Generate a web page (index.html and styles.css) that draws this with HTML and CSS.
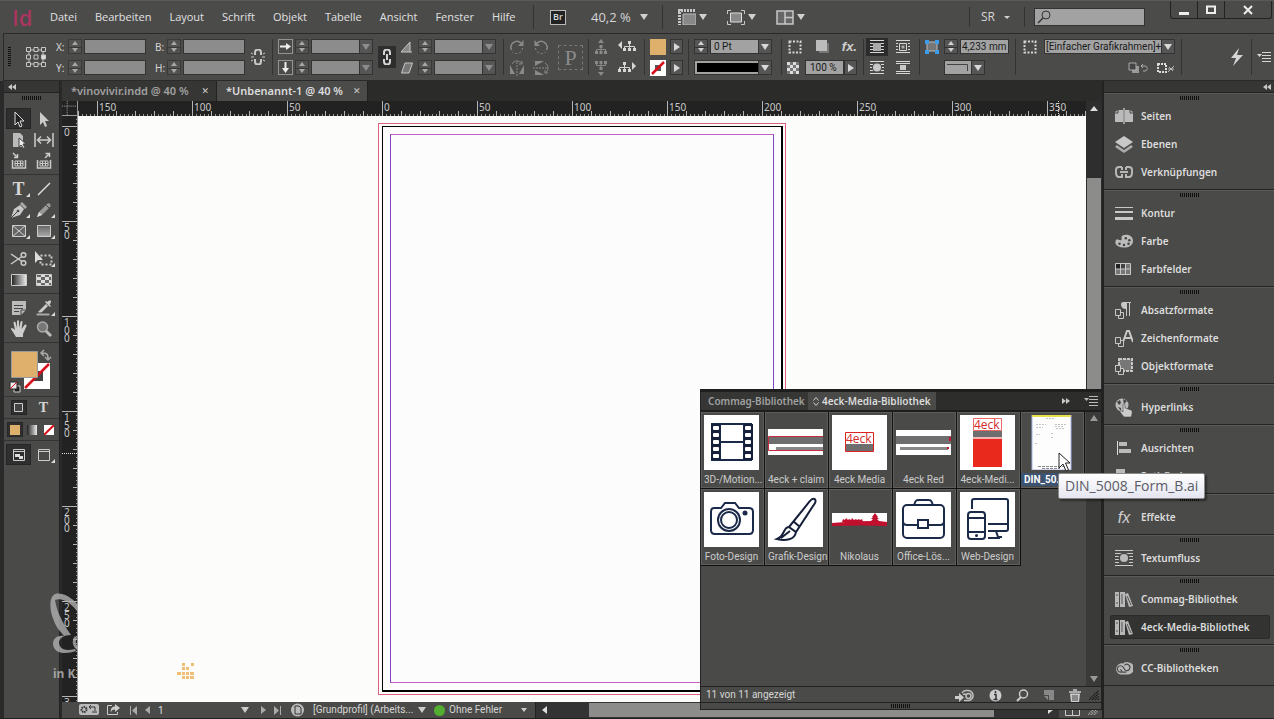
FILE: index.html
```html
<!DOCTYPE html>
<html lang="de">
<head>
<meta charset="utf-8">
<title>Unbenannt-1</title>
<link rel="stylesheet" href="styles.css">
</head>
<body>
<svg class="sprite" aria-hidden="true">
  <defs>
    <linearGradient id="lg" x1="0" x2="1"><stop offset="0" stop-color="#222"/><stop offset="1" stop-color="#eee"/></linearGradient>
    <linearGradient id="gv" x1="0" x2="0" y1="0" y2="1"><stop offset="0" stop-color="#666"/><stop offset="1" stop-color="#aaa"/></linearGradient>
  </defs>
  <symbol id="tree-v" viewBox="0 0 14 16"><path d="M7 0l3 4H4zM5.500 6h3v3h-3zM1 12h3v3H1zM5.500 12h3v3h-3zM10 12h3v3h-3z" fill="currentColor"/><path d="M7 8v4M2.500 12v-1.500h9V12" fill="none" stroke="currentColor"/></symbol>
  <symbol id="tree-h" viewBox="0 0 18 14"><path d="M0 5l4-4v8zM10 1h3v3h-3zM5 8h3v3H5zM10 8h3v3h-3zM15 8h3v3h-3z" fill="currentColor"/><path d="M11.500 4v5M6.500 8V6.500h10V8" fill="none" stroke="currentColor"/></symbol>
  <symbol id="rot" viewBox="0 0 16 16"><path d="M2.500 11A6 6 0 0 1 12 4" fill="none" stroke="currentColor" stroke-width="1.500"/><path d="M14.500 1v6H9z" fill="currentColor"/><path d="M13.500 9a6 6 0 0 1-10 4" fill="none" stroke="currentColor" stroke-dasharray="2 2"/></symbol>
  <symbol id="flip" viewBox="0 0 16 16"><path d="M1 14V5l5 9zM15 14V5l-5 9z" fill="currentColor"/><path d="M8 2v14" stroke="currentColor" stroke-dasharray="2 1"/><path d="M3 4c2-4 8-4 10 0M13 1v3h-3" fill="none" stroke="currentColor"/></symbol>
  <symbol id="wrap1" viewBox="0 0 14 14"><path d="M0 .5h14M0 3.500h14M0 6.500h14M0 9.500h14M0 12.500h14" stroke="currentColor"/><path d="M3 3h8v8H3z" fill="#aaa"/></symbol>
  <symbol id="wrap2" viewBox="0 0 14 14"><path d="M0 .5h14M0 3.500h2M12 3.500h2M0 6.500h2M12 6.500h2M0 9.500h2M12 9.500h2M0 12.500h14" stroke="currentColor"/><path d="M3.500 3.500h7v7h-7z" fill="none" stroke="currentColor"/><path d="M5.500 5.500h3v3h-3z" fill="#aaa"/></symbol>
  <symbol id="wrap3" viewBox="0 0 14 14"><path d="M0 .5h14M0 3.500h3M11 3.500h3M0 6.500h2M12 6.500h2M0 9.500h3M11 9.500h3M0 12.500h14" stroke="currentColor"/><circle cx="7" cy="6.500" r="4" fill="#c8c8c8"/></symbol>
  <symbol id="wrap4" viewBox="0 0 14 14"><path d="M0 .5h14M0 2.500h14M0 10.500h14M0 12.500h14" stroke="currentColor"/><path d="M4 4h6v5H4z" fill="#c8c8c8"/></symbol>
  <symbol id="books" viewBox="0 0 18 16"><path d="M0 1h4v15H0zM5 1h5v15H5zM10 3l3-1 5 13-4 1z" fill="#b8b8b8"/><path d="M1 4h2M1 12h2M7 3v10M12 5l4 9" stroke="#555" fill="none"/></symbol>
  <symbol id="fstyle" viewBox="0 0 9 10"><path d="M3.500 3.500h5v6h-5z" fill="#4a4a48" stroke="#c8c8c8"/><path d="M.5.5h5v6h-5z" fill="#4a4a48" stroke="#c8c8c8"/></symbol>
  <symbol id="cc" viewBox="0 0 20 16"><path d="M6 15.200h8.500A6.500 6.500 0 0 0 14 1.500a6.500 6.500 0 0 0-5 1.500A6.200 6.200 0 0 0 6 15.200z" fill="#b8b8b8"/><path d="M12.500 12.500H6a3.500 3.500 0 1 1 3-5.500l2.500 3.500a3.500 3.500 0 1 0-1-5.500M6 9.500l2 3" fill="none" stroke="#4a4a48" stroke-width="1.300"/></symbol>
  <symbol id="flyout" viewBox="0 0 14 10"><path d="M0 2h5L2.500 5z" fill="currentColor"/><path d="M5 .5h9M5 3.500h9M5 6.500h9M5 9.500h9" stroke="currentColor"/></symbol>
  <symbol id="none" viewBox="0 0 16 16"><path d="M0 0h16v16H0z" fill="#fff"/><path d="M5 5h6v6H5z" fill="#555"/><path d="M2 14L14 2" stroke="#d8101c" stroke-width="2.500"/></symbol>
  <symbol id="frame" viewBox="0 0 16 16"><path d="M2.500 2.500h11v11h-11z" fill="none" stroke="currentColor" stroke-width="2" stroke-dasharray="2 1.500"/></symbol>
  <symbol id="checker" viewBox="0 0 12 12"><path d="M0 0h12v12H0z" fill="#777"/><path d="M0 0h3v3H0zM6 0h3v3H6zM3 3h3v3H3zM9 3h3v3H9zM0 6h3v3H0zM6 6h3v3H6zM3 9h3v3H3zM9 9h3v3H9z" fill="#ddd"/></symbol>
  <symbol id="chain" viewBox="0 0 10 16"><path d="M2 6V3.500a3 3 0 0 1 6 0V6M2 10v2.500a3 3 0 0 0 6 0V10M5 5v6" fill="none" stroke="currentColor" stroke-width="2"/></symbol>
  <symbol id="first" viewBox="0 0 7 9"><path d="M.5 0v9" stroke="#aaa"/><path d="M7 0v9L2 4.500z" fill="#aaa"/></symbol>
  <symbol id="chev" viewBox="0 0 8 6"><path d="M4 0v6L0 3zM8 0v6L4 3z" fill="#c8c8c8"/></symbol>
</svg>

<header class="menubar">
  <span class="logo">Id</span>
  <nav class="menus">
    <button>Datei</button><button>Bearbeiten</button><button>Layout</button><button>Schrift</button><button>Objekt</button><button>Tabelle</button><button>Ansicht</button><button>Fenster</button><button>Hilfe</button>
  </nav>
  <div class="viewtools">
    <button class="bridge">Br</button>
    <button class="zoomlevel down">40,2 %</button>
  </div>
  <div class="screens">
    <button class="down" aria-label="Anzeigeoptionen"><svg width="18" height="16" viewBox="0 0 18 16"><path d="M5 5h13v11H5z" fill="#888" stroke="#bbb"/><path d="M0 1.500h18M1.500 0v16" stroke="#c8c8c8" stroke-width="3" stroke-dasharray="2 1"/></svg></button>
    <button class="down" aria-label="Bildschirmmodus"><svg width="18" height="15" viewBox="0 0 18 15"><path d="M3.500 3h11v9h-11z" fill="#888" stroke="#ddd"/><path d="M.5 4V.5H4M14 .5h3.500V4M.5 11v3.500H4M14 14.500h3.500V11" fill="none" stroke="#c8c8c8"/></svg></button>
    <button class="down" aria-label="Dokumente anordnen"><svg width="18" height="15" viewBox="0 0 18 15"><path d="M1 1h16v13H1zM9 1v13M9 7.500h8" fill="#666" stroke="#c8c8c8" stroke-width="1.500"/></svg></button>
  </div>
  <button class="workspace-menu down">SR</button>
  <label class="search"><svg width="14" height="14" viewBox="0 0 14 14"><circle cx="9" cy="5" r="4" fill="none" stroke="#333"/><path d="M6 8l-5 5" stroke="#333" stroke-width="1.500"/></svg><input type="search" aria-label="Suche"></label>
  <div class="winbuttons">
    <button aria-label="Minimieren"><svg width="10" height="10" viewBox="0 0 10 10"><path d="M0 7h10v3H0z" fill="#eee"/></svg></button>
    <button aria-label="Maximieren"><svg width="10" height="10" viewBox="0 0 10 10"><path d="M1 1.500h8v6.500H1z" fill="none" stroke="#eee" stroke-width="2"/></svg></button>
    <button aria-label="Schließen"><svg width="10" height="10" viewBox="0 0 10 10"><path d="M1 1l8 8M9 1l-8 8" stroke="#eee" stroke-width="2"/></svg></button>
  </div>
</header>

<section class="control">
  <div class="one"><i class="vgrip"></i></div>
  <div class="one"><svg width="20" height="20" viewBox="0 0 20 20" fill="none" stroke="#c8c8c8"><path d="M3 3h14v14H3z"/><path fill="#4a4a48" d="M.5.5h4v4h-4zM8 .5h4v4H8zM15.500.5h4v4h-4zM.5 8h4v4h-4zM8 8h4v4H8zM.5 15.500h4v4h-4zM8 15.500h4v4H8zM15.500 15.500h4v4h-4z"/><path fill="#ddd" d="M15.500 8h4v4h-4z"/></svg></div>
  <div class="pair">
    <label for="fx">X:</label><span class="spin off"><button aria-label="X erhöhen"></button><button aria-label="X verringern"></button></span><input id="fx" class="off">
    <label for="fy">Y:</label><span class="spin off"><button aria-label="Y erhöhen"></button><button aria-label="Y verringern"></button></span><input id="fy" class="off">
  </div>
  <div class="pair">
    <label for="fb">B:</label><span class="spin off"><button aria-label="B erhöhen"></button><button aria-label="B verringern"></button></span><input id="fb" class="off">
    <label for="fh">H:</label><span class="spin off"><button aria-label="H erhöhen"></button><button aria-label="H verringern"></button></span><input id="fh" class="off">
  </div>
  <div class="one"><svg width="14" height="16" viewBox="0 0 14 16" fill="none" stroke="#c8c8c8"><path d="M4 6V3.500a3 3 0 0 1 6 0V6M4 10v2.500a3 3 0 0 0 6 0V10" stroke-width="2"/><path d="M0 4l2 1M0 8h3M0 12l2-1M14 4l-2 1M14 8h-3M14 12l-2-1"/></svg></div>
  <div class="pair wide sep">
    <svg width="15" height="15" viewBox="0 0 15 15"><path d="M.5.500h14v14H.5z" fill="none" stroke="#ddd" stroke-dasharray="1 1"/><path d="M2 7.500h8" stroke="#eee" stroke-width="2"/><path d="M8 4l5 3.500L8 11z" fill="#eee"/></svg><span class="spin off"><button aria-label="Breite erhöhen"></button><button aria-label="Breite verringern"></button></span><span class="combo off"><select aria-label="X-Skalierung"><option></option></select></span>
    <svg width="15" height="15" viewBox="0 0 15 15"><path d="M.5.500h14v14H.5z" fill="none" stroke="#ddd" stroke-dasharray="1 1"/><path d="M7.500 2v8" stroke="#eee" stroke-width="2"/><path d="M4 8l3.500 5L11 8z" fill="#eee"/></svg><span class="spin off"><button aria-label="Höhe erhöhen"></button><button aria-label="Höhe verringern"></button></span><span class="combo off"><select aria-label="Y-Skalierung"><option></option></select></span>
  </div>
  <div class="one"><button class="lock" aria-label="Proportionen beibehalten"><svg width="10" height="16"><use href="#chain"/></svg></button></div>
  <div class="pair wide">
    <svg width="12" height="12" viewBox="0 0 12 12"><path d="M0 11h11M0 11L9 1v10" fill="#888" stroke="#c8c8c8"/></svg><span class="spin off"><button aria-label="Winkel erhöhen"></button><button aria-label="Winkel verringern"></button></span><span class="combo off"><select aria-label="Drehwinkel"><option></option></select></span>
    <svg width="12" height="12" viewBox="0 0 12 12"><path d="M4 1h7.500L8 11H.5z" fill="#777" stroke="#c8c8c8"/></svg><span class="spin off"><button aria-label="Scherung erhöhen"></button><button aria-label="Scherung verringern"></button></span><span class="combo off"><select aria-label="Scherwinkel"><option></option></select></span>
  </div>
  <div class="quad dim sep">
    <svg width="16" height="16"><use href="#rot"/></svg><svg class="mirror" width="16" height="16"><use href="#rot"/></svg>
    <svg width="16" height="16"><use href="#flip"/></svg><svg class="turn" width="16" height="16"><use href="#flip"/></svg>
  </div>
  <div class="one dim"><span class="bigp">P</span></div>
  <div class="quad trees sep">
    <svg class="dim" width="14" height="16"><use href="#tree-v"/></svg><svg width="18" height="14"><use href="#tree-h"/></svg>
    <svg class="dim down-flip" width="14" height="16"><use href="#tree-v"/></svg><svg class="mirror" width="18" height="14"><use href="#tree-h"/></svg>
  </div>
  <div class="quad color sep">
    <i class="tan"></i><button class="go" aria-label="Fläche"></button>
    <svg width="16" height="16"><use href="#none"/></svg><button class="go" aria-label="Kontur"></button>
  </div>
  <div class="rows sep">
    <div><span class="spin"><button aria-label="Stärke erhöhen"></button><button aria-label="Stärke verringern"></button></span><span class="combo"><select aria-label="Konturstärke"><option>0 Pt</option></select></span></div>
    <div><span class="combo line"><select aria-label="Konturart"><option></option></select></span></div>
  </div>
  <div class="rows sep fx">
    <div><svg width="16" height="16"><use href="#frame"/></svg><svg width="15" height="15" viewBox="0 0 15 15"><path d="M4 4h10v10H4z" fill="#777"/><path d="M1 1h11v11H1z" fill="#bbb"/></svg><b class="fxi">fx.</b></div>
    <div><svg width="12" height="12"><use href="#checker"/></svg><span class="percent"><input aria-label="Deckkraft" value="100 %"><button class="go" aria-label="Deckkraft einstellen"></button></span></div>
  </div>
  <div class="quad wrap sep">
    <span class="on"><svg width="14" height="14"><use href="#wrap1"/></svg></span><svg width="14" height="14"><use href="#wrap2"/></svg>
    <span><svg width="14" height="14"><use href="#wrap3"/></svg></span><svg width="14" height="14"><use href="#wrap4"/></svg>
  </div>
  <div class="rows sep corner">
    <div><svg width="14" height="15" viewBox="0 0 14 15"><path d="M2 3h10v9H2z" fill="#777" stroke="#bbb"/><path d="M0 1h4v4H0zM10 1h4v4h-4zM0 11h4v4H0zM10 11h4v4h-4z" fill="#3d9be9"/></svg><span class="spin"><button aria-label="Ecke erhöhen"></button><button aria-label="Ecke verringern"></button></span><input aria-label="Eckengröße" value="4,233 mm"></div>
    <div class="indent"><span class="combo edge"><select aria-label="Eckenform"><option></option></select><svg width="22" height="8" viewBox="0 0 22 8"><path d="M0 1.500h20.500V8" fill="none" stroke="#444"/></svg></span></div>
  </div>
  <div class="rows sep style">
    <div><svg width="16" height="16"><use href="#frame"/></svg><span class="combo long"><select aria-label="Objektformat"><option>[Einfacher Grafikrahmen]+</option></select></span></div>
    <div class="end"><svg width="21" height="12" viewBox="0 0 21 12"><path d="M4 4h7v7H4z" fill="#999"/><path d="M1 1h7v7H1z" fill="#444" stroke="#aaa"/><path d="M15 2l-2 2 2 2M13 4h4c3 0 3 5 0 5h-2" fill="none" stroke="#aaa"/></svg><svg width="18" height="12" viewBox="0 0 18 12"><path d="M1 2h8v8H1z" fill="none" stroke="#ddd" stroke-width="2" stroke-dasharray="2 1"/><path d="M11 10l6-6M12 5l4 4M11 7h6" stroke="#bbb"/></svg></div>
  </div>
  <div class="one bolt sep"><svg width="13" height="18" viewBox="0 0 13 18"><path d="M9 0L1 10l5 0-3 8 10-11-6 0z" fill="#d5d5d5"/></svg></div>
  <div class="one sep last"><button aria-label="Menü"><svg width="14" height="10"><use href="#flyout"/></svg></button></div>
</section>

<main class="work">
  <aside class="tools">
    <div class="head"><svg width="8" height="6"><use href="#chev"/></svg></div>
    <i class="grip"></i>
    <div class="tgroup">
      <button class="on" aria-label="Auswahl"><svg width="18" height="18" viewBox="0 0 18 18"><path d="M5 2v13l3-3 2 5 2-1-2-5h4z" fill="#222" stroke="#ddd"/></svg></button>
      <button aria-label="Direktauswahl"><svg width="18" height="18" viewBox="0 0 18 18"><path d="M5 2v13l3-3 2 5 2-1-2-5h4z" fill="#ccc"/></svg></button>
      <button aria-label="Seite"><svg width="18" height="18" viewBox="0 0 18 18"><path d="M3 2h7l3 3v11H3z" fill="#bbb"/><path d="M9 7v9l2-2 3 4 1-1-2-4h3z" fill="#eee" stroke="#444"/></svg></button>
      <button aria-label="Lücke"><svg width="20" height="18" viewBox="0 0 20 18"><path d="M1 2v14M19 2v14" stroke="#ccc" stroke-width="1.500"/><path d="M4 9h12M7 5.500L3.500 9 7 12.500M13 5.500L16.500 9 13 12.500" fill="none" stroke="#ccc" stroke-width="1.500"/></svg></button>
      <button aria-label="Inhaltsaufnahme"><svg width="18" height="18" viewBox="0 0 18 18"><path d="M2.500 8v8h13V8" fill="none" stroke="#ccc" stroke-width="1.500"/><path d="M5 9h8v5H5zM7.500 9v5M10.500 9v5M5 11.500h8" fill="none" stroke="#ccc"/><path d="M3 1l4 4M7.500 2v3.500H4" stroke="#ccc" fill="none" stroke-width="1.500"/></svg></button>
      <button aria-label="Inhaltsplatzierung"><svg width="18" height="18" viewBox="0 0 18 18"><path d="M2.500 8v8h13V8" fill="none" stroke="#ccc" stroke-width="1.500"/><path d="M5 9h8v5H5zM7.500 9v5M10.500 9v5M5 11.500h8" fill="none" stroke="#ccc"/><path d="M10 6l4-4M10.500 1.500h4V5" stroke="#ccc" fill="none" stroke-width="1.500"/></svg></button>
    </div>
    <div class="tgroup">
      <button class="more serif">T</button>
      <button aria-label="Linie"><svg width="18" height="18" viewBox="0 0 18 18"><path d="M3 15L15 3" stroke="#ddd" stroke-width="1.500"/></svg></button>
      <button class="more" aria-label="Zeichenstift"><svg width="18" height="18" viewBox="0 0 18 18"><path d="M1 17l3-9 6-4 4 4-4 6z" fill="#c8c8c8"/><path d="M10 3l2-2 5 5-2 2z" fill="#aaa"/><path d="M1 17l6-6" stroke="#444"/><circle cx="8" cy="10" r="1.300" fill="#444"/></svg></button>
      <button class="more" aria-label="Buntstift"><svg width="18" height="18" viewBox="0 0 18 18"><path d="M2 16l2-5 8-8c2-2 5 1 3 3l-8 8z" fill="#999"/><path d="M2 16l2-5 3 3z" fill="#ddd"/><path d="M11 4l3 3" stroke="#444"/></svg></button>
      <button class="more" aria-label="Rechteckrahmen"><svg width="18" height="18" viewBox="0 0 18 18"><path d="M2.500 3.500h13v11h-13zM2.500 3.500l13 11M15.500 3.500l-13 11" fill="#666" stroke="#ccc"/></svg></button>
      <button class="more" aria-label="Rechteck"><svg width="18" height="18" viewBox="0 0 18 18"><path d="M2.500 3.500h13v11h-13z" fill="url(#gv)" stroke="#ccc"/></svg></button>
    </div>
    <div class="tgroup">
      <button aria-label="Schere"><svg width="18" height="18" viewBox="0 0 18 18" fill="none" stroke="#ccc" stroke-width="1.500"><circle cx="13.500" cy="5" r="2.300"/><circle cx="13.500" cy="13" r="2.300"/><path d="M12 6.500L1 14M12 11.500L1 4"/></svg></button>
      <button class="more" aria-label="Transformieren"><svg width="20" height="18" viewBox="0 0 20 18"><path d="M6.500 5.500h11v9h-11z" fill="none" stroke="#ccc" stroke-width="2" stroke-dasharray="2 2"/><path d="M1 1v12l3-3h5z" fill="#ddd"/></svg></button>
      <button aria-label="Verlauf"><svg width="18" height="18" viewBox="0 0 18 18"><path d="M1.500 3.500h15v11h-15z" fill="url(#lg)" stroke="#ccc"/></svg></button>
      <button aria-label="Weiche Verlaufskante"><svg width="18" height="18" viewBox="0 0 18 18"><path d="M1.500 3.500h15v11h-15z" fill="#666" stroke="#ccc"/><path d="M2 6h4v3H2zM10 6h4v3h-4zM6 9h4v3H6zM14 9h2v3h-2zM2 12h4v2H2zM10 12h4v2h-4zM6 4h4v2H6zM14 4h2v2h-2z" fill="#ddd"/></svg></button>
    </div>
    <div class="tgroup">
      <button aria-label="Notiz"><svg width="18" height="18" viewBox="0 0 18 18"><path d="M2 2h14v9l-5 5H2z" fill="#bbb"/><path d="M4 6.500h9M4 9.500h9M4 12.500h5M11 16v-5h5" stroke="#444" fill="none"/></svg></button>
      <button class="more" aria-label="Pipette"><svg width="18" height="18" viewBox="0 0 18 18"><path d="M3 13L11 5l2 2-8 8zM10 3l5 5 1-1-1.500-1.500C18 2 15 0 12.500 3L11 2z" fill="#ccc"/><path d="M1 14h14v3H1z" fill="#aaa" stroke="#444"/></svg></button>
      <button aria-label="Hand"><svg width="18" height="18" viewBox="0 0 18 18"><path d="M6 17L1 9c0-2 2-1 4 1L3.500 3c0-2 2-1.500 2.300 0L7 8V1.500c0-1.700 2-1.700 2 0V8l1.500-6c.5-1.500 2.300-1 2 .5L11.500 9l3-4c1-1.200 2.500-.2 2 1L13 14v3z" fill="#ccc"/></svg></button>
      <button aria-label="Zoom"><svg width="18" height="18" viewBox="0 0 18 18"><path d="M10 10l6 6" stroke="#bbb" stroke-width="3"/><circle cx="7.500" cy="7" r="5" fill="#777" stroke="#aaa" stroke-width="1.500"/></svg></button>
    </div>
    <div class="swatches"><svg width="44" height="46" viewBox="0 0 44 46"><path d="M15 14h26v26H15z" fill="#fff"/><path d="M24 22h10v10H24z" fill="#444"/><path d="M16 39L40 15" stroke="#d8101c" stroke-width="2.500"/><path d="M2.500 2.500h26v26h-26z" fill="#deb06c" stroke="#999"/><path d="M33 4c5 0 6 1 6 6M35 1l-3 3 3 3M36 8l3 3 3-3" fill="none" stroke="#aaa" stroke-width="1.500"/><path d="M5 37h6v6H5z" fill="#222" stroke="#ccc"/><path d="M1 33h7v7H1z" fill="#eee" stroke="#222"/><path d="M1 40l7-7" stroke="#d8101c"/></svg></div>
    <div class="tgroup tight">
      <button class="on small" aria-label="Format auf Rahmen"><svg width="12" height="12" viewBox="0 0 12 12"><path d="M1.500 1.500h8v8h-8z" fill="#444" stroke="#ccc"/></svg></button><button class="serif sm">T</button>
    </div>
    <div class="tgroup three">
      <button class="on small" aria-label="Farbe anwenden"><i class="tan"></i></button><button aria-label="Verlauf anwenden"><svg width="10" height="10"><path d="M0 0h10v10H0z" fill="url(#lg)"/></svg></button><button aria-label="Keine"><svg width="10" height="10" viewBox="0 0 10 10"><path d="M0 0h10v10H0z" fill="#fff"/><path d="M0 10L10 0" stroke="#d8101c" stroke-width="2"/></svg></button>
    </div>
    <div class="tgroup view">
      <button class="on" aria-label="Normal"><svg width="12" height="12" viewBox="0 0 12 12"><path d="M.5.500h11v11H.5zM0 2.500h12" fill="none" stroke="#ccc"/><path d="M2 5h5v3H2zM6 7h4v3H6z" fill="#ddd"/></svg></button>
      <button class="more" aria-label="Vorschau"><svg width="12" height="12" viewBox="0 0 12 12"><path d="M.5.500h11v11H.5zM0 2.500h12" fill="none" stroke="#ccc"/></svg></button>
    </div>
  </aside>

  <section class="doc">
    <div class="tabs">
      <button class="tab">*vinovivir.indd @ 40 %<span>✕</span></button>
      <button class="tab active">*Unbenannt-1 @ 40 %<span>✕</span></button>
    </div>
    <div class="rulerrow">
      <svg class="origin" viewBox="0 0 16 15"><path d="M0 5.500h16M5.500 0v15" stroke="#aaa" stroke-dasharray="1 1"/></svg>
      <svg class="hruler" height="15">
        <defs>
          <pattern id="hp" x="19" y="0" width="95" height="15" patternUnits="userSpaceOnUse">
            <path d="M.5 0v15M19.500 10v5M38.500 10v5M57.500 10v5M76.500 10v5" stroke="#b5b5b5"/>
            <path d="M4.500 13v2M8.500 13v2M12.500 13v2M16.500 13v2M23.500 13v2M27.500 13v2M31.500 13v2M35.500 13v2M42.500 13v2M46.500 13v2M50.500 13v2M54.500 13v2M61.500 13v2M65.500 13v2M69.500 13v2M73.500 13v2M80.500 13v2M84.500 13v2M88.500 13v2M92.500 13v2" stroke="#999"/>
          </pattern>
        </defs>
        <rect width="100%" height="15" fill="url(#hp)"/>
        <g><text x="21" y="10">150</text><text x="116" y="10">100</text><text x="211" y="10">50</text><text x="306" y="10">0</text><text x="401" y="10">50</text><text x="496" y="10">100</text><text x="591" y="10">150</text><text x="686" y="10">200</text><text x="781" y="10">250</text><text x="876" y="10">300</text><text x="971" y="10">350</text></g>
        <path d="M980.500 0v15" stroke="#ddd" stroke-dasharray="1 1"/>
      </svg>
      <span class="up"></span>
    </div>
    <div class="canvasrow">
      <svg class="vruler" width="16">
        <defs>
          <pattern id="vp" x="0" y="10" width="16" height="95" patternUnits="userSpaceOnUse">
            <path d="M0 .5h16M11 19.500h5M11 38.500h5M11 57.500h5M11 76.500h5" stroke="#b5b5b5"/>
            <path d="M14 4.500h2M14 8.500h2M14 12.500h2M14 16.500h2M14 23.500h2M14 27.500h2M14 31.500h2M14 35.500h2M14 42.500h2M14 46.500h2M14 50.500h2M14 54.500h2M14 61.500h2M14 65.500h2M14 69.500h2M14 73.500h2M14 80.500h2M14 84.500h2M14 88.500h2M14 92.500h2" stroke="#999"/>
          </pattern>
        </defs>
        <rect width="16" height="100%" fill="url(#vp)"/>
        <g><text x="2" y="20">0</text><text x="2" y="115">5</text><text x="2" y="123">0</text><text x="2" y="210">1</text><text x="2" y="218">0</text><text x="2" y="226">0</text><text x="2" y="305">1</text><text x="2" y="313">5</text><text x="2" y="321">0</text><text x="2" y="400">2</text><text x="2" y="408">0</text><text x="2" y="416">0</text><text x="2" y="495">2</text><text x="2" y="503">5</text><text x="2" y="511">0</text><text x="2" y="590">3</text></g>
        <path d="M0 337.500h16" stroke="#ddd" stroke-dasharray="1 1"/>
      </svg>
      <div class="canvas">
        <div class="bleed"><div class="page"><div class="margin"></div></div></div>
        <svg class="pixels" width="18" height="18" viewBox="0 0 18 18" fill="#eebf75"><path d="M5 0h3v3H5zM14 0h3v3h-3zM5 4h3v3H5zM9 4h3v3H9zM0 9h4v3H0zM5 9h3v3H5zM9 9h3v3H9zM13 9h4v3h-4zM5 13h3v3H5zM9 13h3v3H9zM13 13h4v3h-4z"/></svg>
      </div>
      <div class="vscroll"><i></i></div>
    </div>
    <footer class="status">
      <svg width="20" height="12" viewBox="0 0 20 12"><rect width="20" height="11" rx="2" fill="#bbb"/><circle cx="5" cy="5.500" r="2.500" fill="none" stroke="#333" stroke-width="2" stroke-dasharray="1.500 .7"/><path d="M11 3h5v4M18 8h-5M12 1l-2 2 2 2" stroke="#333" fill="none"/></svg>
      <svg width="13" height="12" viewBox="0 0 13 12"><path d="M5 1.500H.5v9h10V8" fill="none" stroke="#ccc"/><path d="M8 0l5 4-5 4V5.500C5 5.500 4 7 4 9 3 5 5 2.500 8 2.500z" fill="#ccc"/></svg>
      <svg class="first" width="7" height="9"><use href="#first"/></svg><i class="tri l"></i>
      <select class="pageno" aria-label="Seite"><option>1</option></select><i class="tri d"></i>
      <i class="tri r"></i><svg class="mirror" width="7" height="9"><use href="#first"/></svg>
      <svg class="prof" width="14" height="14" viewBox="0 0 14 14"><circle cx="6.500" cy="7" r="6.500" fill="#bbb"/><path d="M4 3h4l2 2v6H4z" fill="#bbb" stroke="#333"/></svg>
      <span class="profile">[Grundprofil] (Arbeits...</span><i class="tri d"></i>
      <i class="dot"></i><span class="nofail">Ohne Fehler</span><i class="tri d tiny"></i>
      <div class="hscroll"><i class="tri l bright"></i><b></b><i class="tri r bright"></i></div>
      <svg class="split" width="15" height="12" viewBox="0 0 15 12"><path d="M.5.500h14v11H.5zM7.500 0v12" fill="none" stroke="#ccc"/></svg>
      <svg width="10" height="10" viewBox="0 0 10 10"><path d="M0 10L10 0M3 10l7-7M6 10l4-4" stroke="#bbb" stroke-width="1.500" stroke-dasharray="1 1"/></svg>
    </footer>
  </section>

  <aside class="dock">
    <div class="head"><svg width="8" height="6"><use href="#chev"/></svg></div>
    <div class="dgroup"><i class="grip"></i>
      <button><svg width="18" height="16" viewBox="0 0 18 16"><path d="M0 4l3-2h5v12H0zM10 2h5l3 2v10h-8z" fill="#bbb"/><path d="M9 0v16" stroke="#eee"/><path d="M3 2v3H0M15 2v3h3" stroke="#444" fill="none"/></svg>Seiten</button>
      <button><svg width="18" height="17" viewBox="0 0 18 17"><path d="M9 0l9 6-9 6-9-6z" fill="#c8c8c8"/><path d="M2 9l7 5 7-5 2 2-9 6-9-6z" fill="#aaa"/></svg>Ebenen</button>
      <button><svg width="18" height="12" viewBox="0 0 18 12" fill="none" stroke="#b8b8b8" stroke-width="2"><path d="M7 1H4C0 1 1 6 1 6s0 5 3 5h3V8M11 1h3c4 0 3 5 3 5s0 5-3 5h-3V8M5 6h8M7 1v3M11 1v3"/></svg>Verknüpfungen</button></div>
    <div class="dgroup"><i class="grip"></i>
      <button><svg width="18" height="13" viewBox="0 0 18 13"><path d="M0 0h18v1H0zM0 4h18v2H0zM0 10h18v3H0z" fill="#c8c8c8"/></svg>Kontur</button>
      <button><svg width="20" height="15" viewBox="0 0 20 15"><path d="M8 1c4-2 12-1 12 6 0 6-7 8-13 7-5-1-8-4-6-8 1-2 3 0 5 0 3 0 0-4 2-5z" fill="#bbb"/><g fill="#444"><circle cx="12" cy="4" r="1.400"/><circle cx="16" cy="6" r="1.400"/><circle cx="15" cy="10" r="1.400"/><circle cx="10" cy="11.500" r="1.400"/><circle cx="5" cy="10" r="1.400"/></g></svg>Farbe</button>
      <button><svg width="18" height="12" viewBox="0 0 18 12"><path d="M.5.500h15v11H.5z" fill="#777" stroke="#c8c8c8"/><path d="M1 1h5v5H1z" fill="#222"/><path d="M6 1h5v5H6z" fill="#444"/><path d="M5.500 0v12M10.500 0v12M0 6h16" stroke="#c8c8c8"/></svg>Farbfelder</button></div>
    <div class="dgroup"><i class="grip"></i>
      <button><svg width="18" height="18" viewBox="0 0 18 18"><path d="M8 1h8v1h-1v13h-1V2h-2v13h-1V8C5 8 5 1 8 1z" fill="#c8c8c8"/><use href="#fstyle" y="8" width="9" height="10"/></svg>Absatzformate</button>
      <button><svg width="18" height="18" viewBox="0 0 18 18"><path d="M8 13l4-11h2l4 11M9.500 9h7" fill="none" stroke="#c8c8c8" stroke-width="2"/><use href="#fstyle" y="8" width="9" height="10"/></svg>Zeichenformate</button>
      <button><svg width="18" height="18" viewBox="0 0 18 18"><path d="M4 2h13v12H4z" fill="#777" stroke="#c8c8c8" stroke-width="2" stroke-dasharray="3 1"/><use href="#fstyle" y="8" width="9" height="10"/></svg>Objektformate</button></div>
    <div class="dgroup"><i class="grip"></i>
      <button><svg width="18" height="19" viewBox="0 0 18 19"><circle cx="7" cy="7" r="6.500" fill="#bbb"/><path d="M2 4l3-2 1 3-2 2zM8 1l4 2-3 3zM3 9l3 1v3z" fill="#444"/><path d="M8 6c2-1 2 1 2 4l6 2c2 1 1 5 0 7H9l-4-5c0-2 2-1 3 0z" fill="#ccc" stroke="#4a4a48" stroke-width=".6"/></svg>Hyperlinks</button></div>
    <div class="dgroup"><i class="grip"></i>
      <button><svg width="18" height="14" viewBox="0 0 18 14"><path d="M2.500 0v14" stroke="#ddd"/><path d="M4 1h8v4H4zM4 8h12v4H4z" fill="#bbb"/></svg>Ausrichten</button>
      <button><svg width="18" height="14" viewBox="0 0 18 14"><path d="M1 0h9v9H1zM7 6h9v8H7z" fill="#bbb"/></svg>Pathfinder</button></div>
    <div class="dgroup"><i class="grip"></i>
      <button><span class="fxi big">fx</span>Effekte</button></div>
    <div class="dgroup"><i class="grip"></i>
      <button><svg width="18" height="16" viewBox="0 0 18 16"><path d="M0 .5h18M0 3.500h18M0 6.500h4M14 6.500h4M0 9.500h4M14 9.500h4M0 12.500h4M14 12.500h4M0 15.500h18" stroke="#ccc"/><circle cx="9" cy="8" r="5.500" fill="#4a4a48"/><circle cx="9" cy="8" r="4" fill="#bbb"/></svg>Textumfluss</button></div>
    <div class="dgroup"><i class="grip"></i>
      <button><svg width="18" height="16"><use href="#books"/></svg>Commag-Bibliothek</button>
      <button class="on"><svg width="18" height="16"><use href="#books"/></svg>4eck-Media-Bibliothek</button></div>
    <div class="dgroup"><i class="grip"></i>
      <button><svg width="20" height="16"><use href="#cc"/></svg>CC-Bibliotheken</button></div>
  </aside>
</main>

<div class="watermark"><svg width="30" height="62" viewBox="0 0 30 62"><path d="M30 14C22 4 12 0 6 2 0 5 0 18 5 29c3 8 7 11 10 15-6-1-11 2-11 8 1 11 14 10 23 7l-1-2c-9 2-15 1-16-6 0-5 5-8 12-8C17 36 8 22 6 8c7-3 17 3 24 14z" fill="#b0b0b0"/><path d="M27 45c-3 4-2 9 2 12" fill="none" stroke="#b0b0b0" stroke-width="3"/></svg><span>in K</span></div>

<section class="library">
  <div class="ltabs"><button>Commag-Bibliothek</button><button class="active"><svg width="6" height="9" viewBox="0 0 6 9"><path d="M.5 3.500L3 .5l2.500 3M.5 5.500L3 8.500l2.500-3" fill="none" stroke="#ccc"/></svg>4eck-Media-Bibliothek</button><span class="ltools"><svg class="mirror" width="8" height="6"><use href="#chev"/></svg><svg width="14" height="10"><use href="#flyout"/></svg></span></div>
  <div class="lbody">
    <div class="cells">
      <figure><svg viewBox="0 0 55 55"><path d="M0 0h55v55H0z" fill="#fff"/><g fill="none" stroke="#1b2a49" stroke-width="2"><path d="M8 9h39v36H8zM16 9v36M40 9v36M16 27h24"/></g><path d="M7 9h9v36H7zM40 9h9v36h-9z" fill="#16203a"/><g fill="#fff"><rect x="9" y="11" width="6" height="4" rx="1"/><rect x="9" y="18" width="6" height="4" rx="1"/><rect x="9" y="25" width="6" height="4" rx="1"/><rect x="9" y="32" width="6" height="4" rx="1"/><rect x="9" y="39" width="6" height="4" rx="1"/><rect x="41" y="11" width="6" height="4" rx="1"/><rect x="41" y="18" width="6" height="4" rx="1"/><rect x="41" y="25" width="6" height="4" rx="1"/><rect x="41" y="32" width="6" height="4" rx="1"/><rect x="41" y="39" width="6" height="4" rx="1"/></g></svg><figcaption>3D-/Motion...</figcaption></figure>
      <figure><svg viewBox="0 0 55 55"><path d="M0 14h55v26H0z" fill="#fff"/><path d="M1 22h54v7H1z" fill="#6e6e6e"/><path d="M8 32h47v3H8z" fill="#888"/><path d="M.5 21.500H55M.5 21.500v14H55" fill="none" stroke="#c82a40"/></svg><figcaption>4eck + claim</figcaption></figure>
      <figure><svg viewBox="0 0 55 55"><path d="M0 0h55v55H0z" fill="#fff"/><path d="M14 29h27v7H14z" fill="#6e6e6e"/><path d="M13.500 17.500h28v19h-28z" fill="none" stroke="#d22"/><text x="14" y="28" font-size="12" fill="#d42a2a">4eck</text></svg><figcaption>4eck Media</figcaption></figure>
      <figure><svg viewBox="0 0 55 55"><path d="M0 15h55v25H0z" fill="#fff"/><path d="M0 21h55v8H0z" fill="#6e6e6e"/><path d="M4 32h48v3H4z" fill="#888"/><path d="M53 22h2v4h-2zM51 32h2v2h-2z" fill="#c8102e"/></svg><figcaption>4eck Red</figcaption></figure>
      <figure><svg viewBox="0 0 55 55"><path d="M0 0h55v55H0z" fill="#fff"/><path d="M13 24h29v28H13z" fill="#e8291c"/><path d="M13 16h29v6H13z" fill="#6e6e6e"/><path d="M13 22h29v2H13z" fill="#f3b5b5"/><path d="M13.500 3.500h28v12h-28z" fill="none" stroke="#e66"/><text x="14" y="14" font-size="12" fill="#d42a2a">4eck</text></svg><figcaption>4eck-Medi...</figcaption></figure>
      <figure class="sel"><svg viewBox="0 0 55 55"><path d="M8 0h39v55H8z" fill="#fdfdfd" stroke="#a9b4e6"/><path d="M8 0h39v2H8z" fill="#e8e04a"/><path d="M12 9.500h10M12 12.500h7M31 9.500h12M31 11.500h8M32 13.500h8M22 3.500h9M12 19.500h4M27 18.500h3M27 22.500h3M11 28.500h3" stroke="#c4c4c4" stroke-dasharray="2 1"/><path d="M14 51.500h27M18 53.500h18" stroke="#888" stroke-dasharray="3 1"/></svg><figcaption>DIN_50...</figcaption></figure>
      <figure><svg viewBox="0 0 55 55"><path d="M0 0h55v55H0z" fill="#fff"/><g fill="none" stroke="#1b2a49" stroke-width="2"><path d="M10 16h7l4-5h10l4 5h10q4 0 4 4v18q0 4-4 4H11q-4 0-4-4V20q0-4 3-4z"/><circle cx="25" cy="28" r="11"/><circle cx="25" cy="28" r="8"/></g><circle cx="41" cy="21" r="2.500" fill="#1b2a49"/></svg><figcaption>Foto-Design</figcaption></figure>
      <figure><svg viewBox="0 0 55 55"><path d="M0 0h55v55H0z" fill="#fff"/><g fill="none" stroke="#16203a" stroke-width="2"><path d="M21 35L42 9c3-4 7-2 5 2L28 40zM25 29l7 6M21 35c-6 0-4 9-12 12 8 2 18 1 19-7M13 46l9-7"/></g></svg><figcaption>Grafik-Design</figcaption></figure>
      <figure><svg viewBox="0 0 55 55"><path d="M0 21h55v10H0z" fill="#fff"/><path d="M0 31q20-2 39-2l2-2h-2l2-2h-1l3-4 3 4h-1l2 2h-2l2 2 8 1v4q-25-1-55 0z" fill="#c0102e"/><path d="M10 30l1-3 2 1 1-2 2 2 1-1 2 1 1-2 2 2 2-1 1 1 2-1 1 1 2-1 1 3z" fill="#c0102e"/></svg><figcaption>Nikolaus</figcaption></figure>
      <figure><svg viewBox="0 0 55 55"><path d="M0 0h55v55H0z" fill="#fff"/><g fill="none" stroke="#1b2a49" stroke-width="2"><rect x="7" y="13" width="41" height="33" rx="4"/><path d="M18 13c2-5 2-5 5-5h9c3 0 3 0 5 5M7 29q0 4 4 4h11M48 29q0 4-4 4H33M22 28h10v8H22z"/></g></svg><figcaption>Office-Lös...</figcaption></figure>
      <figure><svg viewBox="0 0 55 55"><path d="M0 0h55v55H0z" fill="#fff"/><g fill="none" stroke="#1b2a49" stroke-width="2"><path d="M12 17V9q0-2 2-2h32q2 0 2 2v28q0 2-2 2H28M28 32h20M36 39l2 6h4M28 46h12"/><rect x="8" y="20" width="17" height="27" rx="3"/><path d="M8 26h17M8 40h17"/></g><circle cx="16.500" cy="43.500" r="1.500" fill="#1b2a49"/></svg><figcaption>Web-Design</figcaption></figure>
    </div>
    <div class="lscroll"><i class="tri u"></i><i class="tri d"></i></div>
  </div>
  <div class="lfoot"><span>11 von 11 angezeigt</span>
    <svg width="20" height="13" viewBox="0 0 20 13"><g fill="none" stroke="#c0c0c0" stroke-width="1.500"><path d="M7 4a5 5 0 0 1 5-2.500 5 5 0 0 1 2 10H9"/><circle cx="13.500" cy="7" r="2.500"/><path d="M8 5.500a3 3 0 0 1 3 0"/></g><path d="M0 7h4V4l5 4.500L4 13v-3H0z" fill="#ccc"/></svg>
    <svg width="13" height="13" viewBox="0 0 13 13"><circle cx="6.500" cy="6.500" r="6" fill="#ccc"/><path d="M6.500 2v2M5 5.500h2V10M4.500 10.500h4" stroke="#333" stroke-width="1.500" fill="none"/></svg>
    <svg width="13" height="13" viewBox="0 0 13 13"><circle cx="7.500" cy="5" r="4" fill="none" stroke="#ccc" stroke-width="1.500"/><path d="M5 8l-4 4" stroke="#ccc" stroke-width="2"/></svg>
    <svg width="12" height="12" viewBox="0 0 12 12"><path d="M1 1h10v10H6V6H1z" fill="#888"/><path d="M1 7h4v4z" fill="#888"/></svg>
    <svg width="12" height="13" viewBox="0 0 12 13"><path d="M4 1h4M0 3h12" stroke="#ccc" stroke-width="1.500"/><path d="M1 4.500h10l-1 8.500H2z" fill="#ccc"/><path d="M4 6v6M6 6v6M8 6v6" stroke="#444"/></svg>
    <svg class="resize" width="10" height="10" viewBox="0 0 10 10"><path d="M0 10L10 0M3 10l7-7M6 10l4-4M9 10l1-1" stroke="#111" stroke-width="1.500" stroke-dasharray="1 1"/></svg>
  </div>
  <div class="lgrip"><i class="grip"></i></div>
</section>
<svg class="cursor" width="14" height="20" viewBox="0 0 14 20"><path d="M1 1v15l4-4 3 7 2.500-1L7.500 11H12z" fill="#fff" stroke="#222"/></svg>
<div class="tooltip" role="tooltip">DIN_5008_Form_B.ai</div>
</body>
</html>
```
FILE: styles.css
```css
* { box-sizing: border-box; }
body {
  margin: 0; height: 100vh; display: flex; flex-direction: column; overflow: hidden; position: relative;
  background: #4a4a48; color: #d6d6d6; font: 11px/14px "Noto Sans", "Open Sans", sans-serif;
  border-bottom: 1px solid #222;
}
.sprite { position: absolute; width: 0; height: 0; }
svg { flex: none; display: block; }
button { border: 0; padding: 0; margin: 0; background: none; color: inherit; font: inherit; display: flex; align-items: center; }
input, select { font: 10px/13px "Roboto", sans-serif; border: 1px solid #333; border-radius: 0; padding: 0 2px; margin: 0; height: 15px; min-width: 0; background: #a2a2a2; color: #1a1a1a; outline: 0; appearance: none; }
i { display: block; flex: none; }
.dim { color: #8a8a8a; }

/* menu bar */
.menubar { display: flex; align-items: center; height: 33px; flex: none; padding-left: 12px; background: #4b4b4a; font: 12px/16px "Open Sans", sans-serif; border-top: 1px solid #5a5a58; }
.logo { width: 38px; font: 600 22px/26px "Open Sans", sans-serif; color: #a8365f; }
.menus { display: flex; gap: 18px; width: 483px; font-size: 11px; color: #e0e0e0; }
.viewtools { display: flex; gap: 25px; align-items: center; padding: 4px 0 4px 16px; width: 129px; border-left: 1px solid #333; }
.bridge { width: 16px; height: 15px; justify-content: center; background: #222; border: 1px solid #bbb; font-size: 9px; font-weight: 600; }
.zoomlevel { font-size: 13px; }
.down::after { content: ""; border: 4px solid transparent; border-top: 6px solid #d0d0d0; border-bottom: 0; margin-left: 3px; }
.zoomlevel.down::after { margin-left: 9px; }
.screens { display: flex; gap: 20px; padding: 4px 0 4px 15px; border-left: 1px solid #333; }
.workspace-menu { margin-left: auto; padding: 2px 13px 2px 11px; border: solid #333; border-width: 0 1px; width: 56px; }
.workspace-menu.down::after { margin-left: 9px; border-width: 3px 3px 0; }
.search { display: flex; align-items: center; width: 111px; height: 18px; margin: 0 25px 0 9px; padding: 0 2px; background: #a2a2a2; border: 1px solid #333; }
.search input { flex: 1; background: none; border: 0; }
.winbuttons { display: flex; align-self: flex-start; height: 18px; margin-right: 2px; border: 1px solid #222; border-top: 0; border-radius: 0 0 3px 3px; }
.winbuttons button { width: 27px; justify-content: center; border-right: 1px solid #222; }
.winbuttons button:last-child { width: 46px; border: 0; }

/* control bar */
.control {
  display: grid; flex: none; height: 48px; margin-left: 3px; padding-left: 4px;
  grid-template-columns: 18px 30px 99px 96px 21px 106px 23px 102px 55px 30px 56px 44px 93px 82px 56px 96px 166px 1fr 23px;
  grid-template-rows: minmax(0, 1fr);
  border: 1px solid #2a2a2a; border-width: 1px 0 1px 1px; background: #4b4b4a;
}
.control > div { min-width: 0; margin: 5px 0; align-content: center; }
.control > .sep { border-left: 1px solid #333; padding-left: 5px; }
.one { display: flex; align-items: center; }
.vgrip { width: 3px; height: 20px; background: repeating-linear-gradient(#111 0 1px, #4b4b4a 1px 2px); }
.pair { display: grid; grid-template-columns: 10px 14px 62px; gap: 6px 2px; align-items: center; }
.pair.wide { grid-template-columns: 15px 14px 62px; }
.pair label { white-space: nowrap; font-size: 10px; }
.spin { display: grid; width: 14px; height: 15px; border: 1px solid #333; background: #555; flex: none; }
.spin button { justify-content: center; height: 6px; }
.spin button::after { content: ""; border: 3px solid transparent; border-bottom: 4px solid #d0d0d0; border-top: 0; }
.spin button + button::after { transform: rotate(180deg); }
.spin button + button { border-top: 1px solid #333; }
.spin.off { opacity: .7; }
input.off { background: #8c8c8c; width: 62px; }
.combo { display: flex; position: relative; width: 62px; height: 15px; }
.combo select { width: 100%; padding: 0 14px 0 3px; }
.combo::after { content: ""; position: absolute; right: 1px; top: 1px; bottom: 1px; width: 12px; border-left: 1px solid #333; background: #555; pointer-events: none; }
.combo::before { content: ""; position: absolute; z-index: 1; right: 3px; top: 5px; border: 4px solid transparent; border-top: 6px solid #d8d8d8; border-bottom: 0; pointer-events: none; }
.combo > svg { position: absolute; left: 3px; top: 3px; pointer-events: none; }
.combo.off select { background: #8c8c8c; }
.combo.off::before { border-top-color: #8c8c8c; }
.lock { width: 18px; height: 22px; justify-content: center; background: #2e2e2e; }
.quad { display: grid; grid-template-columns: 16px 18px; gap: 5px 8px; align-items: center; }
.quad.trees { grid-template-columns: 14px 18px; column-gap: 10px; }
.mirror { transform: scaleX(-1); }
.down-flip { transform: scaleY(-1); }
.turn { transform: rotate(90deg); }
.bigp { width: 25px; height: 25px; font: 22px/24px "Liberation Serif", serif; text-align: center; border: 1px dashed #777; }
.quad.color { grid-template-columns: 16px 13px; gap: 5px 4px; }
.tan { width: 16px; height: 16px; background: #deb06c; }
.go { width: 13px; height: 15px; justify-content: center; border: 1px solid #333; background: #555; flex: none; }
.go::after { content: ""; border: 4px solid transparent; border-left: 6px solid #d8d8d8; border-right: 0; }
.rows { display: grid; gap: 6px; }
.rows > div { display: flex; gap: 2px; align-items: center; height: 15px; }
.combo.line { width: 78px; }
.combo.line select { background: #000; box-shadow: inset 0 0 0 2px #a2a2a2; }
.fx > div { gap: 6px; justify-content: space-between; padding-right: 7px; }
.fxi { font: italic 700 13px/15px "Liberation Sans", sans-serif; color: #d0d0d0; }
.fxi.big { font-size: 16px; width: 18px; font-weight: 400; text-align: center; }
.percent { display: flex; }
.percent input { width: 39px; padding-left: 4px; }
.quad.wrap { grid-template-columns: 22px 14px; gap: 3px 8px; padding-left: 2px; }
.wrap span { display: grid; place-items: center; height: 18px; }
.wrap .on { background: #2c2c2c; }
.corner > div { gap: 5px; }
.corner input { width: 49px; padding: 0 1px; margin-left: -3px; }
.corner .indent { padding-left: 19px; }
.combo.edge { width: 41px; }
.style > div { gap: 6px; padding: 0 7px 0 1px; }
.style .end { justify-content: flex-end; gap: 8px; }
.combo.long { width: 131px; }
.combo.long select { padding: 0 12px 0 1px; }
.bolt { justify-content: flex-end; padding-right: 8px; }
.control > .last { padding-left: 5px; }

/* workspace */
.work { flex: 1; min-height: 0; display: flex; background: #2a2a2a; }
.head { height: 12px; background: #363635; border-bottom: 1px solid #222; display: flex; align-items: center; flex: none; padding: 0 4px; }
.grip { width: 20px; height: 4px; margin: 0 auto; background: repeating-linear-gradient(90deg, #111 0 1px, transparent 1px 2px); }
.tools { width: 57px; margin-left: 3px; flex: none; background: #4a4a48; border-left: 1px solid #2a2a2a; border-right: 1px solid #222; }
.tools .grip { margin: 3px 0 8px 18px; }
.tgroup { display: grid; grid-template-columns: 25px 25px; grid-auto-rows: 21px; padding: 3px 2px; border-bottom: 1px solid #333; }
.tools .grip + .tgroup { padding-top: 0; }
.tgroup button { justify-content: center; position: relative; }
.tgroup .on { background: #2f2f2f; box-shadow: inset 0 0 0 1px #262626; }
.more::after { content: ""; position: absolute; right: 1px; bottom: 2px; border: 2px solid transparent; border-right-color: #ddd; border-bottom-color: #ddd; }
.serif { font: 700 18px/20px "Liberation Serif", serif; }
.serif.sm { font-size: 14px; }
.swatches { height: 54px; padding: 6px 0 0 5px; border-bottom: 1px solid #333; }
.tgroup.tight { grid-auto-rows: 15px; padding: 3px 2px; }
.small { width: 16px; justify-self: center; }
.tgroup.three { grid-template-columns: repeat(3, 17px); grid-auto-rows: 15px; }
.three .tan { width: 10px; height: 10px; }
.tgroup.view { border: 0; }

.doc { flex: 1; min-width: 0; margin-left: 2px; display: flex; flex-direction: column; }
.tabs { display: flex; height: 20px; background: #2b2b2a; flex: none; }
.tab { width: 155px; justify-content: space-between; padding: 0 7px 0 9px; gap: 10px; font: 600 11px/16px "Noto Sans", sans-serif; color: #a0a0a0; background: #363635; border-right: 1px solid #222; white-space: nowrap; }
.tab.active { width: 151px; background: #4b4b4a; color: #dcdcdc; }
.tab span { font: 9px/12px "DejaVu Sans", sans-serif; color: #ccc; }
.rulerrow { display: flex; height: 15px; background: #222; flex: none; }
.origin { width: 16px; height: 15px; border-right: 1px solid #999; border-bottom: 1px solid #999; }
.hruler { flex: 1; min-width: 0; }
.hruler, .vruler { fill: #c8c8c8; font: 10px "Noto Sans", sans-serif; overflow: hidden; }
.up { width: 16px; background: #2e2e2e; display: grid; place-items: center; }
.up::after { content: ""; border: 4px solid transparent; border-bottom: 5px solid #ddd; border-top: 0; }
.canvasrow { flex: 1; min-height: 0; display: flex; }
.vruler { height: 100%; background: #222; border-right: 1px solid #999; }
.canvas { flex: 1; min-width: 0; background: #fcfcfb; position: relative; overflow: hidden; }
.bleed { position: absolute; left: 300px; top: 7px; width: 408px; height: 572px; border: 1px solid #dc6080; padding: 2px 2px 2px 3px; }
.page { height: 100%; border: 1px solid #000; border-right-width: 2px; border-bottom-width: 2px; padding: 7px; background: #fdfcfd; }
.margin { height: 100%; border: 1px solid #c45fc8; border-left-color: #8442c4; border-right-color: #8442c4; }
.pixels { position: absolute; left: 99px; top: 547px; }
.vscroll { width: 16px; background: #2e2e2e; padding: 62px 1px 0 1px; }
.vscroll i { height: 100%; background: #8c8c8b; }
.status { height: 16px; flex: none; display: flex; align-items: center; padding-left: 17px; background: #4a4a48; font: 10px/14px "Roboto", sans-serif; white-space: nowrap; }
.status > * { margin-right: 8px; }
.tri { width: 0; border: 4px solid transparent; }
.tri.l { border-right: 5px solid #aaa; border-left: 0; }
.tri.r { border-left: 5px solid #aaa; border-right: 0; }
.tri.d { border-top: 6px solid #ccc; border-bottom: 0; }
.tri.u { border-bottom: 6px solid #999; border-top: 0; }
.tri.tiny { border-width: 4px 3px 0; }
.tri.l.bright { border-right-color: #ddd; }
.tri.r.bright { border-left-color: #ddd; }
.status .first { margin-left: 2px; }
.status .pageno { background: none; border: 0; color: #ddd; width: 75px; padding: 0; }
.status .tri.r { margin-left: 4px; }
.status .prof { margin-left: 2px; }
.profile { width: 97px; }
.nofail { width: 64px; }
.dot { width: 11px; height: 11px; border-radius: 50%; background: #52ad31; }
.status .dot { margin-right: 4px; }
.status .hscroll { flex: 1; display: flex; align-items: center; align-self: stretch; background: #333; margin-right: 6px; padding: 0 6px; border-left: 1px solid #222; }
.hscroll b { flex: 1; height: 14px; margin: 0 50px 0 42px; background: #8c8c8b; }
.status > svg:last-child { margin-right: 4px; }

/* dock */
.dock { width: 172px; flex: none; border-left: 2px solid #222; background: #4a4a48; }
.dock .head { justify-content: flex-end; padding-right: 3px; }
.dgroup { padding: 2px 4px 3px 6px; border-bottom: 1px solid #252525; border-top: 1px solid #5a5a58; }
.dgroup .grip { margin: 0 auto 2px 70px; }
.dgroup button { width: 100%; height: 28px; padding-left: 5px; gap: 8px; font: 600 10px/16px "Noto Sans", sans-serif; color: #dcdcdc; border-radius: 3px; white-space: nowrap; }
.dgroup button > :first-child { flex: 0 0 18px; }
.dgroup .on { height: 24px; margin: 2px 0; background: #333332; box-shadow: inset 0 0 0 1px #2a2a2a; }

/* floating library */
.library { position: absolute; right: 172px; top: 389px; width: 402px; height: 321px; display: flex; flex-direction: column; background: #4a4a48; border: 1px solid #222; border-top: 3px solid #1e1e1e; }
.ltabs { display: flex; height: 18px; background: #2d2d2c; font: 600 10px/16px "Noto Sans", sans-serif; flex: none; }
.ltabs button { width: 107px; padding-left: 7px; color: #a0a0a0; background: #363635; white-space: nowrap; }
.ltabs .active { width: 128px; padding-left: 5px; gap: 3px; background: #4a4a48; color: #dcdcdc; }
.ltools { margin-left: auto; display: flex; align-items: center; gap: 14px; padding-right: 3px; color: #bbb; }
.lbody { flex: 1; min-height: 0; display: flex; border-top: 2px solid #1e1e1e; }
.cells { flex: 1; display: grid; grid-template-columns: repeat(6, 64px); grid-auto-rows: 77px; align-content: start; }
figure { margin: 0; padding: 3px 5px 0 3px; border: 1px solid #111; border-width: 0 1px 1px 0; box-shadow: inset 0 0 0 1px #5e5e5c; font: 10px/13px "Roboto", sans-serif; text-align: center; white-space: nowrap; overflow: hidden; color: #ccc; }
figure svg { width: 55px; height: 55px; margin-bottom: 3px; font-family: "Open Sans", sans-serif; }
.sel figcaption { margin: 0 -5px 0 -3px; padding-left: 3px; background: #3c5372; color: #fff; font-weight: 700; text-align: left; }
.lscroll { width: 15px; background: #3a3a39; display: flex; flex-direction: column; justify-content: space-between; align-items: center; padding: 3px 0 4px; }
.lscroll .tri.d { border-top-color: #999; }
.lfoot { height: 16px; border-top: 1px solid #222; display: flex; align-items: center; gap: 14px; padding: 1px 2px 0 5px; font: 10px/14px "Roboto", sans-serif; flex: none; }
.lfoot span { margin-right: auto; }
.lfoot .resize { margin-left: -6px; }
.lgrip { height: 7px; border-top: 1px solid #222; flex: none; padding-top: 1px; }
.cursor { position: absolute; left: 1058px; top: 452px; }
.tooltip { position: absolute; left: 1058px; top: 473px; padding: 2px 6px; font: 14px/20px "Open Sans", sans-serif; color: #5b5b66; background: linear-gradient(#fff, #e4e5f0); border: 1px solid #8a8a8a; border-radius: 2px; box-shadow: 2px 2px 2px #0006; }
.watermark { position: absolute; left: 49px; top: 592px; width: 29px; overflow: hidden; opacity: .8; font: 700 12px/16px "Noto Sans", sans-serif; color: #b8b8b8; white-space: nowrap; }
.watermark span { display: block; margin: 12px 0 0 4px; }
```
